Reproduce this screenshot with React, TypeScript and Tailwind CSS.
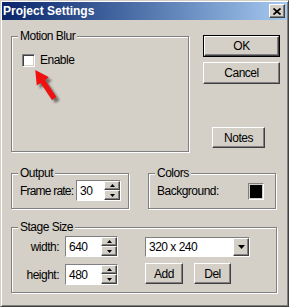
import React from 'react';

const font = "font-['Liberation_Sans',Arial,sans-serif]";

function Group({
  label,
  className,
  children,
}: {
  label: string;
  className: string;
  children?: React.ReactNode;
}) {
  return (
    <div
      className={`relative border border-[#808080] shadow-[inset_1px_1px_0_#fff,1px_1px_0_#fff] ${className}`}
    >
      <span className="absolute -top-[9px] left-[6px] bg-[#d4d0c8] px-[2px] leading-[16px]">
        {label}
      </span>
      {children}
    </div>
  );
}

function Btn({
  children,
  className,
}: {
  children: React.ReactNode;
  className: string;
}) {
  return (
    <div
      className={`flex items-center justify-center border border-t-white border-l-white border-r-[#404040] border-b-[#404040] bg-[#d4d0c8] shadow-[inset_-1px_-1px_0_#808080] ${className}`}
    >
      {children}
    </div>
  );
}

function Arrow({ up }: { up: boolean }) {
  return (
    <svg width="5" height="3" viewBox="0 0 5 3">
      <polygon points={up ? '2.5,0 5,3 0,3' : '0,0 5,0 2.5,3'} fill="#000" />
    </svg>
  );
}

function Spin({ value, w }: { value: string; w: string }) {
  return (
    <div
      className={`flex h-[21px] shrink-0 border border-t-[#808080] border-l-[#808080] border-r-white border-b-white shadow-[inset_1px_1px_0_#404040] ${w}`}
    >
      <div className="flex flex-1 items-center bg-white pl-[3px] pt-[1px]">
        {value}
      </div>
      <div className="flex w-[16px] flex-col">
        <div className="flex h-[9px] items-center justify-center border border-t-white border-l-white border-r-[#404040] border-b-[#404040] bg-[#d4d0c8] shadow-[inset_-1px_-1px_0_#808080]">
          <Arrow up />
        </div>
        <div className="flex flex-1 items-center justify-center border border-t-white border-l-white border-r-[#404040] border-b-[#404040] bg-[#d4d0c8] shadow-[inset_-1px_-1px_0_#808080]">
          <Arrow up={false} />
        </div>
      </div>
    </div>
  );
}

export default function App() {
  return (
    <div
      className={`flex h-[307px] w-[289px] flex-col whitespace-nowrap border border-t-[#d4d0c8] border-l-[#d4d0c8] border-r-[#404040] border-b-[#404040] bg-[#d4d0c8] p-[1px] text-[12px] tracking-[-0.5px] text-black shadow-[inset_1px_1px_0_#fff,inset_-1px_-1px_0_#808080] ${font}`}
    >
      <div className="flex h-[18px] items-center justify-between bg-gradient-to-r from-[#0a246a] to-[#a6caf0] pl-[1px] pr-[2px]">
        <span className="text-[12px] font-bold tracking-normal text-white">
          Project Settings
        </span>
        <Btn className="h-[14px] w-[16px]">
          <svg width="8" height="7" viewBox="0 0 8 7">
            <path d="M0.5 0.5 L7.5 6.5 M7.5 0.5 L0.5 6.5" stroke="#000" strokeWidth="1.7" />
          </svg>
        </Btn>
      </div>

      <div className="flex pl-[9px] pt-[15px]">
        <Group label="Motion Blur" className="mt-[1px] h-[116px] w-[178px]">
          <div className="flex items-center pl-[10px] pt-[14px]">
            <div className="h-[13px] w-[13px] border border-t-[#808080] border-l-[#808080] border-r-white border-b-white bg-white shadow-[inset_1px_1px_0_#404040,inset_-1px_-1px_0_#d4d0c8]" />
            <span className="ml-[5px]">Enable</span>
          </div>
          <svg
            className="absolute left-[21px] top-[32px]"
            width="34"
            height="40"
            viewBox="0 0 32 38"
          >
            <defs>
              <filter id="sh" x="-50%" y="-50%" width="200%" height="200%">
                <feGaussianBlur stdDeviation="1.2" />
              </filter>
            </defs>
            <polygon
              transform="translate(3 3)"
              points="2,1 15,7.9 11.3,10.4 22.1,26.6 17.9,29.4 7.1,13.2 3.4,15.7"
              fill="#303030"
              opacity="0.6"
              filter="url(#sh)"
            />
            <polygon
              points="2,1 15,7.9 11.3,10.4 22.1,26.6 17.9,29.4 7.1,13.2 3.4,15.7"
              fill="#f01010"
            />
          </svg>
        </Group>

        <div className="ml-[14px] flex flex-col">
          <div className="h-[22px] w-[77px] border border-black">
            <Btn className="h-full w-full">OK</Btn>
          </div>
          <Btn className="mt-[5px] h-[22px] w-[77px]">Cancel</Btn>
          <Btn className="ml-[9px] mt-[43px] h-[21px] w-[53px]">Notes</Btn>
        </div>
      </div>

      <div className="mt-[21px] flex pl-[9px]">
        <Group label="Output" className="h-[36px] w-[118px]">
          <div className="flex items-center pl-[8px] pt-[6px]">
            <span className="w-[56px] shrink-0 tracking-[-0.8px]">Frame rate:</span>
            <Spin value="30" w="w-[45px]" />
          </div>
        </Group>
        <Group label="Colors" className="ml-[19px] h-[36px] w-[128px]">
          <div className="flex items-center pl-[8px] pt-[8px]">
            <span className="w-[91px] shrink-0">Background:</span>
            <div className="h-[17px] w-[16px] border border-t-[#808080] border-l-[#808080] border-r-white border-b-white bg-black shadow-[inset_1px_1px_0_#d4d0c8,inset_-1px_-1px_0_#d4d0c8]" />
          </div>
        </Group>
      </div>

      <div className="mt-[18px] flex pl-[9px]">
        <Group label="Stage Size" className="h-[66px] w-[266px]">
          <div className="flex pt-[8px]">
            <div className="flex flex-col gap-[7px]">
              <div className="flex items-center">
                <span className="w-[47px] text-right">width:</span>
                <Spin value="640" w="ml-[6px] w-[53px]" />
              </div>
              <div className="flex items-center">
                <span className="w-[47px] text-right">height:</span>
                <Spin value="480" w="ml-[6px] w-[53px]" />
              </div>
            </div>
            <div className="ml-[27px] flex flex-col pt-[1px]">
              <div className="flex h-[20px] w-[105px] border border-t-[#808080] border-l-[#808080] border-r-white border-b-white shadow-[inset_1px_1px_0_#404040]">
                <div className="flex flex-1 items-center bg-white pl-[3px]">
                  320 x 240
                </div>
                <Btn className="w-[16px]">
                  <svg width="7" height="4" viewBox="0 0 7 4">
                    <polygon points="0,0 7,0 3.5,4" fill="#000" />
                  </svg>
                </Btn>
              </div>
              <div className="mt-[6px] flex">
                <Btn className="h-[21px] w-[38px]">Add</Btn>
                <Btn className="ml-[11px] h-[21px] w-[37px]">Del</Btn>
              </div>
            </div>
          </div>
        </Group>
      </div>
    </div>
  );
}
